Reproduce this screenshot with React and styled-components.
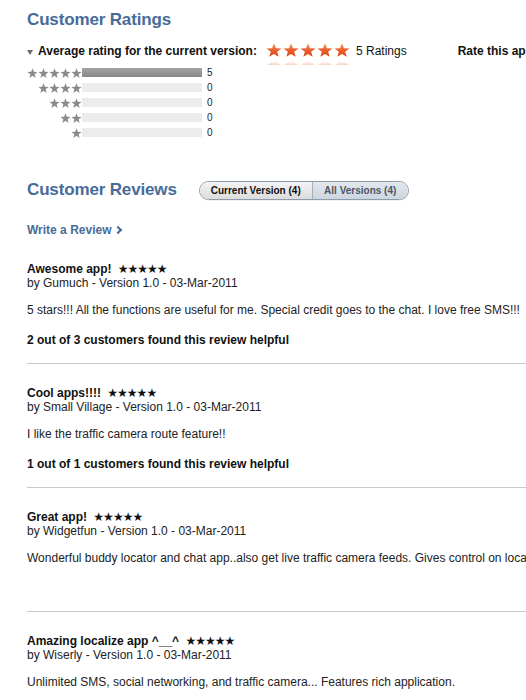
import styled, { createGlobalStyle } from "styled-components"

const Global = createGlobalStyle`
  html, body {
    margin: 0;
    padding: 0;
    overflow: hidden;
    background: #fff;
  }
  body {
    font-family: "Liberation Sans", Arial, Helvetica, sans-serif;
    font-size: 12px;
    color: #111;
  }
`

const Page = styled.div`
  width: 760px;
  padding: 10px 0 0 27px;
`
const SectionTitle = styled.h2`
  margin: 0;
  font-size: 17px;
  line-height: 20px;
  font-weight: bold;
  letter-spacing: -0.15px;
  color: #476c99;
`
const AvgRow = styled.div`
  display: flex;
  align-items: flex-start;
  height: 22px;
  margin-top: 13px;
`
const Disclosure = styled.span`
  width: 0;
  height: 0;
  border-left: 3px solid transparent;
  border-right: 3px solid transparent;
  border-top: 5px solid #6b6b6b;
  margin: 7px 5px 0 0;
`
const AvgLabel = styled.span`
  font-weight: bold;
  line-height: 15px;
  margin-top: 1px;
`
const BigStars = styled.div`
  display: flex;
  margin-left: 9px;
  gap: 1px;
`
const RatingCount = styled.span`
  line-height: 15px;
  margin-top: 1px;
  margin-left: 6px;
`
const RateApp = styled.span`
  font-weight: bold;
  line-height: 15px;
  margin-top: 1px;
  margin-left: 51px;
  white-space: nowrap;
`
const Histogram = styled.div`
  display: flex;
  flex-direction: column;
`
const HistRow = styled.div`
  display: flex;
  align-items: center;
  height: 15px;
`
const HistStars = styled.div`
  display: flex;
  justify-content: flex-end;
  width: 55px;
`
const Bar = styled.div`
  width: 120px;
  height: 9px;
  background: ${p => (p.$filled ? "linear-gradient(#a3a3a3, #8a8a8a)" : "#ececec")};
`
const HistCount = styled.span`
  font-size: 10px;
  line-height: 15px;
  margin-left: 5px;
  color: #222;
`
const ReviewsHeader = styled.div`
  display: flex;
  align-items: center;
  height: 20px;
  margin-top: 40px;
`
const Toggle = styled.div`
  display: flex;
  height: 17px;
  margin-left: 22px;
  border: 1px solid #8d9bad;
  border-radius: 10px;
  overflow: hidden;
  box-shadow: 0 1px 0 rgba(0, 0, 0, 0.06);
`
const ToggleItem = styled.div`
  width: ${p => p.$w}px;
  display: flex;
  align-items: center;
  justify-content: center;
  font-size: 10px;
  font-weight: bold;
  color: ${p => (p.$active ? "#111" : "#4d5664")};
  background: ${p =>
    p.$active
      ? "linear-gradient(#f3f3f3, #dcdcdc)"
      : "linear-gradient(#e3e8ee, #cdd5df)"};
  & + & {
    border-left: 1px solid #a3afbe;
  }
`
const WriteLink = styled.a`
  display: block;
  margin-top: 23px;
  font-weight: bold;
  line-height: 15px;
  color: #476c99;
  text-decoration: none;
`
const Chevron = styled.span`
  display: inline-block;
  width: 4px;
  height: 4px;
  border-right: 2px solid #476c99;
  border-top: 2px solid #476c99;
  transform: rotate(45deg);
  margin: 0 0 1px 4px;
`
const ReviewList = styled.div`
  margin-top: 24px;
`
const Review = styled.div`
  padding-bottom: 16px;
  border-bottom: 1px solid #c9c9cd;
  margin-bottom: 22px;
  line-height: 14px;
`
const ReviewTitle = styled.div`
  font-weight: bold;
  white-space: nowrap;
`
const TitleStars = styled.span`
  font-family: "DejaVu Sans", sans-serif;
  font-size: 12px;
  font-weight: normal;
  margin-left: 3px;
  letter-spacing: -1px;
`
const Byline = styled.div`
  color: #222;
`
const Body = styled.p`
  margin: 13px 0 0;
  color: #222;
  white-space: nowrap;
`
const Helpful = styled.div`
  margin-top: 16px;
  height: 14px;
  font-weight: bold;
`

const starPts =
  "8,0.4 9.94,5.73 15.61,5.93 11.14,9.42 12.7,14.87 8,11.7 3.3,14.87 4.86,9.42 0.39,5.93 6.06,5.73"

const Star = ({ w, h, color }) => (
  <svg width={w} height={h} viewBox="0 0 16 15">
    <polygon fill={color} points={starPts} />
  </svg>
)

const OrangeStar = ({ id }) => (
  <svg width="16" height="22" viewBox="0 0 16 22">
    <defs>
      <linearGradient id={`og${id}`} x1="0" y1="0" x2="0" y2="1">
        <stop offset="0" stopColor="#f79266" />
        <stop offset="0.5" stopColor="#ec5f2c" />
        <stop offset="1" stopColor="#d9461b" />
      </linearGradient>
      <linearGradient id={`rf${id}`} x1="0" y1="0" x2="0" y2="1">
        <stop offset="0" stopColor="#e2582a" stopOpacity="0.85" />
        <stop offset="0.45" stopColor="#f08a64" stopOpacity="0.35" />
        <stop offset="0.7" stopColor="#f08a64" stopOpacity="0" />
      </linearGradient>
    </defs>
    <polygon fill={`url(#og${id})`} points={starPts} transform="scale(1,0.93)" />
    <polygon fill={`url(#rf${id})`} points={starPts} transform="translate(0,28) scale(1,-0.93)" />
  </svg>
)

const hist = [
  { stars: 5, count: 5 },
  { stars: 4, count: 0 },
  { stars: 3, count: 0 },
  { stars: 2, count: 0 },
  { stars: 1, count: 0 },
]

const reviews = [
  {
    title: "Awesome app!",
    by: "Gumuch",
    body: "5 stars!!! All the functions are useful for me. Special credit goes to the chat. I love free SMS!!!",
    helpful: "2 out of 3 customers found this review helpful",
  },
  {
    title: "Cool apps!!!!",
    by: "Small Village",
    body: "I like the traffic camera route feature!!",
    helpful: "1 out of 1 customers found this review helpful",
  },
  {
    title: "Great app!",
    by: "Widgetfun",
    body: "Wonderful buddy locator and chat app..also get live traffic camera feeds. Gives control on location sharing.",
    helpful: "",
  },
  {
    title: "Amazing localize app ^__^",
    by: "Wiserly",
    body: "Unlimited SMS, social networking, and traffic camera... Features rich application.",
    helpful: "1 out of 1 customers found this review helpful",
  },
]

const App = () => {
  return (
    <Page>
      <Global />
      <SectionTitle>Customer Ratings</SectionTitle>
      <AvgRow>
        <Disclosure />
        <AvgLabel>Average rating for the current version:</AvgLabel>
        <BigStars>
          {[0, 1, 2, 3, 4].map(i => (
            <OrangeStar key={i} id={i} />
          ))}
        </BigStars>
        <RatingCount>5 Ratings</RatingCount>
        <RateApp>Rate this app:</RateApp>
      </AvgRow>
      <Histogram>
        {hist.map(r => (
          <HistRow key={r.stars}>
            <HistStars>
              {Array.from({ length: r.stars }).map((_, i) => (
                <Star key={i} w={11} h={10} color="#8a8a8a" />
              ))}
            </HistStars>
            <Bar $filled={r.count > 0} />
            <HistCount>{r.count}</HistCount>
          </HistRow>
        ))}
      </Histogram>

      <ReviewsHeader>
        <SectionTitle>Customer Reviews</SectionTitle>
        <Toggle>
          <ToggleItem $active $w={112}>Current Version (4)</ToggleItem>
          <ToggleItem $w={95}>All Versions (4)</ToggleItem>
        </Toggle>
      </ReviewsHeader>
      <WriteLink href="#">
        Write a Review<Chevron />
      </WriteLink>

      <ReviewList>
        {reviews.map(r => (
          <Review key={r.title}>
            <ReviewTitle>
              {r.title} <TitleStars>★★★★★</TitleStars>
            </ReviewTitle>
            <Byline>by {r.by} - Version 1.0 - 03-Mar-2011</Byline>
            <Body>{r.body}</Body>
            <Helpful>{r.helpful}</Helpful>
          </Review>
        ))}
      </ReviewList>
    </Page>
  )
}

export default App
